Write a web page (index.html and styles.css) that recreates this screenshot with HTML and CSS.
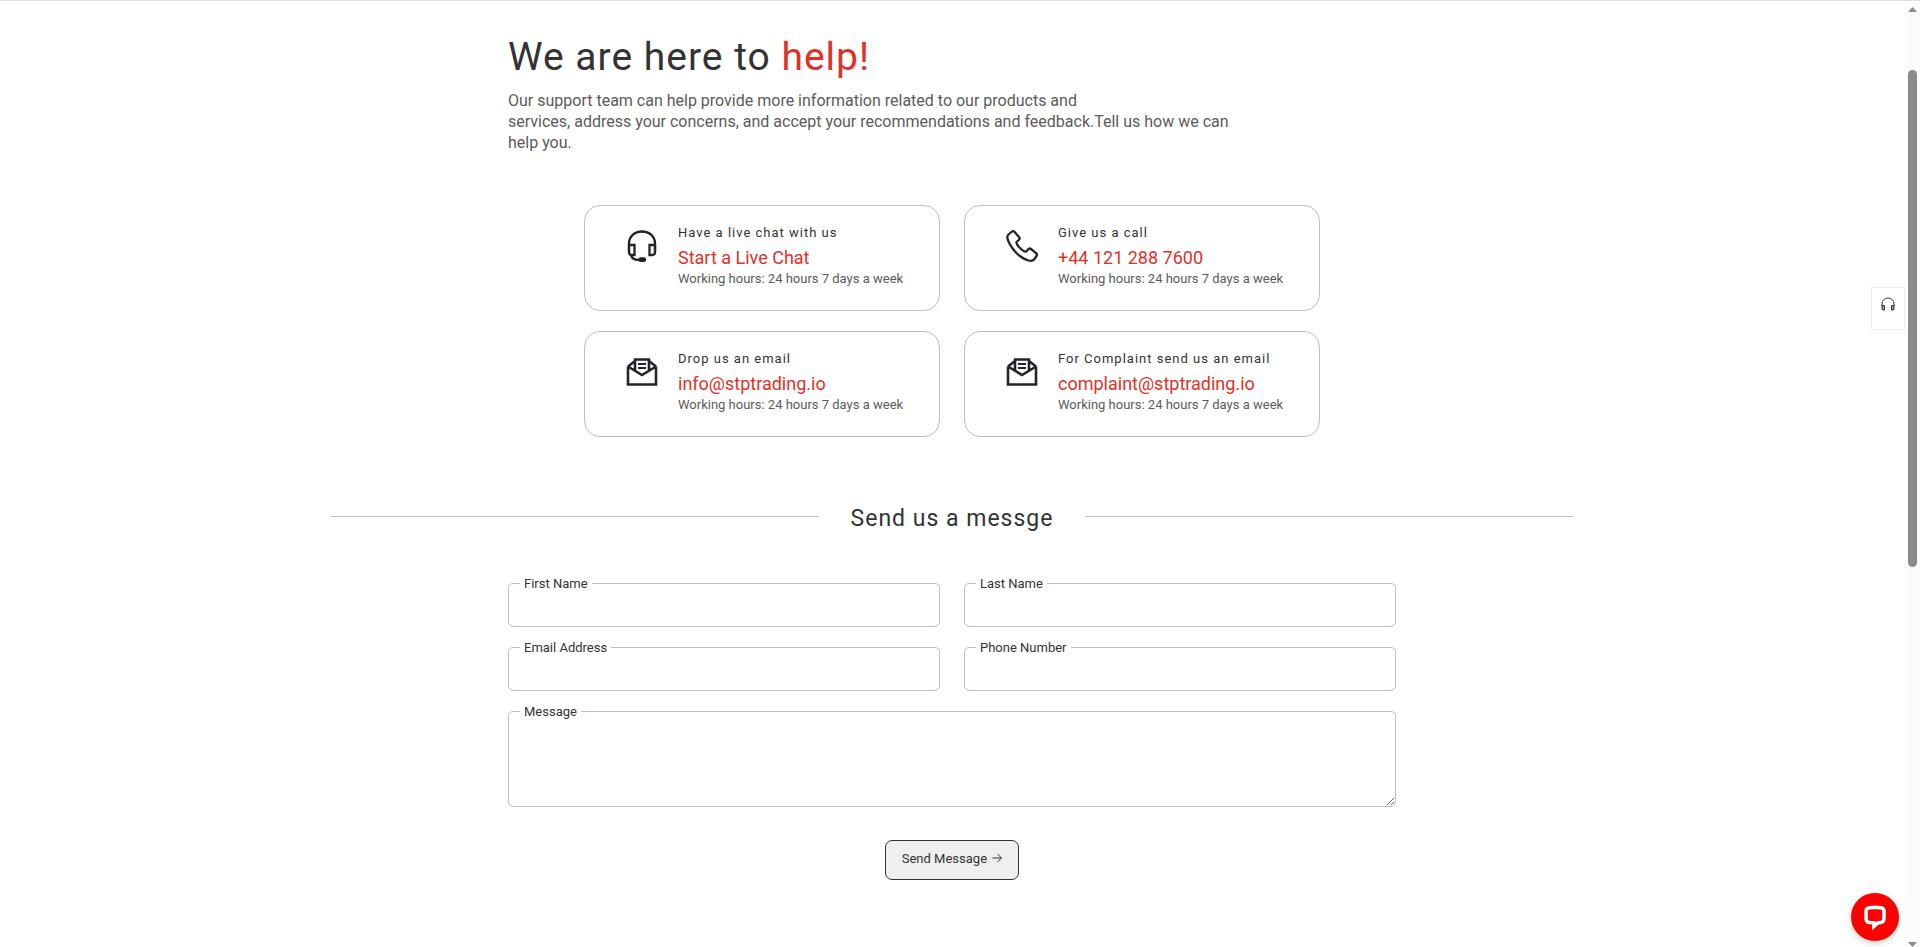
FILE: index.html
```
<!DOCTYPE html>
<html lang="en">
<head>
    <meta charset="UTF-8">
    <meta name="viewport" content="width=device-width, initial-scale=1.0">
    <title>Contact Us</title>
    <link rel="stylesheet" href="styles.css">
</head>
<body>
    <svg class="sprite" aria-hidden="true">
        <symbol id="icon-mail" viewBox="0 0 32 32">
            <path d="M2 10.500V28.500H30V10.500M2 10.500L16 19L30 10.500M2 10.500L9 5M30 10.500L23 5M9 14.500V3.500H23V14.500" fill="none" stroke="currentColor" stroke-width="2.600"/>
            <path d="M12 8H20M12 12H20" stroke="currentColor" stroke-width="2"/>
        </symbol>
    </svg>

    <main>
        <section class="intro">
            <h1>We are here to <span>help!</span></h1>
            <p>Our support team can help provide more information related to our products and<br>
            services, address your concerns, and accept your recommendations and feedback.Tell us how we can help you.</p>
        </section>

        <section class="cards">
            <div class="card">
                <svg class="icon" viewBox="0 0 32 32" fill="none" stroke="currentColor" stroke-width="2.300">
                    <path d="M3 22V13.500C3 6.500 8.500 1.500 16 1.500S29 6.500 29 13.500V22"/>
                    <path d="M3 15H8.500V25H5.500Q3 25 3 22ZM29 15H23.500V25H26.500Q29 25 29 22Z"/>
                    <path d="M5 25Q6 30 13 30"/>
                    <rect x="13.500" y="28.300" width="5.500" height="2.600" rx="1.200" fill="currentColor"/>
                </svg>
                <div>
                    <h5>Have a live chat with us</h5>
                    <a href="#">Start a Live Chat</a>
                    <p>Working hours: 24 hours 7 days a week</p>
                </div>
            </div>
            <div class="card">
                <svg class="icon" viewBox="0 0 32 32" fill="none" stroke="currentColor" stroke-width="2.300" stroke-linejoin="round">
                    <path d="M2.500 4.500L6 1.500Q7.500 .700 8.700 2L13.300 7.500Q14.200 8.800 12.800 10L10.500 12Q10 14 14 18T20.300 21.500L22.500 19Q23.800 18 25 19L30.300 23.300Q31.500 24.500 30.500 26L28.500 29Q26.500 31.500 22.500 30.500Q15.500 28.500 9 21.500Q3 14.500 1.500 8.500Q.900 6 2.500 4.500Z"/>
                </svg>
                <div>
                    <h5>Give us a call</h5>
                    <a href="#">+44 121 288 7600</a>
                    <p>Working hours: 24 hours 7 days a week</p>
                </div>
            </div>
            <div class="card">
                <svg class="icon"><use href="#icon-mail"/></svg>
                <div>
                    <h5>Drop us an email</h5>
                    <a href="#">info@stptrading.io</a>
                    <p>Working hours: 24 hours 7 days a week</p>
                </div>
            </div>
            <div class="card">
                <svg class="icon"><use href="#icon-mail"/></svg>
                <div>
                    <h5>For Complaint send us an email</h5>
                    <a href="#">complaint@stptrading.io</a>
                    <p>Working hours: 24 hours 7 days a week</p>
                </div>
            </div>
        </section>

        <div class="divider">
            <h2>Send us a messge</h2>
        </div>

        <form>
            <div class="field">
                <label for="first-name">First Name</label>
                <input type="text" id="first-name">
            </div>
            <div class="field">
                <label for="last-name">Last Name</label>
                <input type="text" id="last-name">
            </div>
            <div class="field">
                <label for="email">Email Address</label>
                <input type="email" id="email">
            </div>
            <div class="field">
                <label for="phone">Phone Number</label>
                <input type="tel" id="phone">
            </div>
            <div class="field wide">
                <label for="message">Message</label>
                <textarea id="message"></textarea>
            </div>
            <button type="button" class="send">Send Message
                <svg viewBox="0 0 10 10" fill="none" stroke="currentColor"><path d="M.500 5H9.500M5.500 1L9.500 5L5.500 9"/></svg>
            </button>
        </form>
    </main>

    <button type="button" class="support-tab" aria-label="Support">
        <svg viewBox="0 0 14 14" fill="none" stroke="currentColor">
            <path d="M1 9V7a6 6 0 0 1 12 0V9"/>
            <path d="M1 8.500H3.500V13H2Q1 13 1 12ZM13 8.500H10.500V13H12Q13 13 13 12Z" fill="#999"/>
        </svg>
    </button>

    <button type="button" class="chat" aria-label="Open chat">
        <svg viewBox="0 0 24 24">
            <path d="M7 4Q12 3.500 17 4Q19.500 4.200 19.700 7V13.500Q19.500 16.500 17 16.700L14.500 17L11 20V17L7 16.700Q4.500 16.500 4.300 13.500V7Q4.500 4.200 7 4Z" fill="none" stroke="#fff" stroke-width="3"/>
        </svg>
    </button>

    <!-- scroll track -->
    <div class="scrollbar" aria-hidden="true">
        <svg viewBox="0 0 9 5"><path d="M0 5L4.500 0L9 5Z"/></svg>
        <div class="track"><div class="thumb"></div></div>
        <svg viewBox="0 0 9 5"><path d="M0 0L4.500 5L9 0Z"/></svg>
    </div>
</body>
</html>
```
FILE: styles.css
```
* {
    box-sizing: border-box;
}

html {
    overflow: hidden;
}

body {
    margin: 0;
    padding-right: 16px;
    border-top: 1px solid #dedede;
    font-family: Roboto, sans-serif;
    color: #333;
    background-color: #fff;
}

h1, h2, h5, p {
    margin: 0;
    font-weight: 400;
}

.sprite {
    display: none;
}

main {
    padding: 32px 16px 0;
}

.intro {
    max-width: 888px;
    margin: 0 auto;
}

.intro h1 {
    font-size: 39px;
    line-height: 48px;
    letter-spacing: 1px;
    margin-bottom: 9px;
}

.intro h1 span {
    color: #e13127;
}

.intro p {
    max-width: 740px;
    font-size: 16px;
    line-height: 21px;
    color: #5b5b5b;
}

.cards {
    display: grid;
    grid-template-columns: 1fr 1fr;
    gap: 20px 24px;
    max-width: 736px;
    margin: 52px auto 0;
}

.card {
    display: flex;
    gap: 20px;
    min-height: 106px;
    padding: 17px 20px 17px 41px;
    border: 1px solid #bebebe;
    border-radius: 16px;
}

.card .icon {
    width: 32px;
    height: 32px;
    margin-top: 7px;
    color: #212529;
    flex-shrink: 0;
}

.card h5 {
    font-size: 13px;
    line-height: 20px;
    letter-spacing: 1px;
}

.card a {
    display: block;
    margin-top: 4px;
    font-size: 18px;
    line-height: 22px;
    color: #e13127;
    text-decoration: none;
}

.card p {
    font-size: 13px;
    line-height: 20px;
    color: #5b5b5b;
}

.divider {
    display: flex;
    align-items: center;
    gap: 32px;
    max-width: 1244px;
    margin: 64px auto 0;
}

.divider::before,
.divider::after {
    content: '';
    flex: 1;
    height: 1px;
    margin-bottom: 6px;
    background-color: #c4c4c4;
}

.divider h2 {
    font-size: 23px;
    line-height: 36px;
    letter-spacing: 1px;
}

form {
    display: grid;
    grid-template-columns: 1fr 1fr;
    gap: 20px 24px;
    max-width: 888px;
    margin: 46px auto 0;
}

.field {
    position: relative;
}

.field label {
    position: absolute;
    top: -7px;
    left: 12px;
    padding: 0 4px;
    font-size: 13px;
    line-height: 16px;
    background-color: #fff;
}

.field input,
.field textarea {
    display: block;
    width: 100%;
    height: 44px;
    padding: 8px 16px;
    border: 1px solid #bebebe;
    border-radius: 5px;
    font: inherit;
    color: inherit;
    background-color: #fff;
}

.field textarea {
    height: 96px;
}

.wide {
    grid-column: span 2;
}

.send {
    grid-column: span 2;
    justify-self: center;
    height: 40px;
    margin-top: 13px;
    padding: 0 16px 4px;
    border: 1px solid #333;
    border-radius: 7px;
    font-family: inherit;
    font-size: 13px;
    color: #333;
    background-color: #efefef;
    cursor: pointer;
}

.send svg {
    width: 10px;
    height: 10px;
    margin-left: 2px;
}

.support-tab {
    position: fixed;
    top: 287px;
    right: 15px;
    width: 34px;
    height: 43px;
    padding: 0 0 6px;
    border: 1px solid #ebebeb;
    color: #333;
    background-color: #fff;
    cursor: pointer;
}

.support-tab svg {
    width: 14px;
    height: 14px;
}

.chat {
    position: fixed;
    right: 21px;
    bottom: 6px;
    display: grid;
    place-items: center;
    width: 48px;
    height: 48px;
    padding: 0;
    border: none;
    border-radius: 50%;
    background-color: #f00;
    box-shadow: 0 2px 6px rgba(0, 0, 0, 0.2);
    cursor: pointer;
}

.chat svg {
    width: 28px;
    height: 28px;
}

.scrollbar {
    position: fixed;
    top: 1px;
    right: 0;
    bottom: 0;
    display: flex;
    flex-direction: column;
    align-items: center;
    width: 15px;
    padding: 6px 0 0;
    background-color: #fcfcfc;
}

.scrollbar svg {
    width: 9px;
    height: 5px;
    fill: #8b8b8b;
}

.track {
    flex: 1;
    padding-top: 58px;
}

.thumb {
    width: 9px;
    height: 57%;
    border-radius: 5px;
    background-color: #8b8b8b;
}
```
